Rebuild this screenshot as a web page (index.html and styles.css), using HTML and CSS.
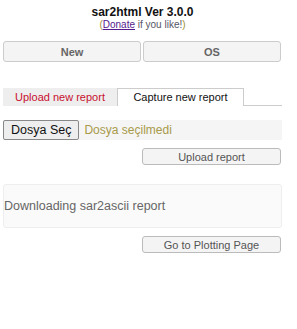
FILE: index.html
```html
<!DOCTYPE html>
<html lang="en">
<head>
  <meta charset="UTF-8">
  <title>sar2html</title>
  <link rel="stylesheet" href="styles.css">
</head>
<body>
  <header class="head">
    <div class="title">sar2html Ver 3.0.0</div>
    <div class="sub"><span class="paren">(</span><a href="#">Donate</a> if you like!<span class="paren">)</span></div>
  </header>
  <nav class="menu">
    <button class="mbtn">New</button>
    <button class="mbtn">OS</button>
  </nav>
  <div class="tabs">
    <div class="tab active">Upload new report</div>
    <div class="tab">Capture new report</div>
    <div class="tab-rest"></div>
  </div>
  <div class="filerow">
    <button class="filebtn">Dosya Seç</button>
    <span class="nofile">Dosya seçilmedi</span>
  </div>
  <div class="right upload"><button class="btn">Upload report</button></div>
  <div class="status">Downloading sar2ascii report</div>
  <div class="right plot"><button class="btn">Go to Plotting Page</button></div>
</body>
</html>
```

FILE: styles.css
```css
* {box-sizing:border-box;}
body{
  margin:0; padding:0 15px 0 3px;
  font-family:"Liberation Sans",Arial,sans-serif;
  background:#fff; color:#333;
  width:297px;
}
.head{ text-align:center; padding-top:5px; }
.title{ font-size:12px; font-weight:bold; color:#111; line-height:14px; }
.sub{ font-size:10px; line-height:12px; color:#556; }
.sub .paren{ color:#a09030; }
.sub a{ color:#551a8b; }
.menu{ display:flex; gap:2px; margin-top:10px; padding-right:1px; }
.mbtn{
  flex:1; height:21px;
  border:1px solid #ccc; border-radius:3px;
  background:#f4f4f4;
  font-family:inherit; font-size:11px; font-weight:bold; color:#666;
  padding:0;
}
.tabs{ display:flex; margin-top:26px; height:18px; }
.tab{
  font-size:11px; line-height:16px; text-align:center;
  border:1px solid #ccc; border-bottom:none;
}
.tab.active{ width:114px; background:#eee; color:#c8102e; border-color:#eee; }
.tab:nth-child(2){ width:127px; background:#fff; color:#111; }
.tab-rest{ flex:1; border-bottom:1px solid #ccc; }
.filerow{
  display:flex; align-items:center; gap:5px;
  margin-top:14px; height:20px;
  background:#f5f5f5;
}
.filebtn{
  height:20px; padding:0 7px;
  border:1px solid #888; border-radius:2px;
  background:#eee;
  font-family:inherit; font-size:12.5px; color:#111;
}
.nofile{ font-size:12px; color:#a89a4a; }
.right{ display:flex; justify-content:flex-end; padding-right:1px; }
.btn{
  width:139px; height:17px; padding:0;
  border:1px solid #bbb; border-radius:3px;
  background:#f4f4f4;
  font-family:inherit; font-size:11px; color:#555;
}
.upload{ margin-top:8px; }
.status{
  margin-top:19px; height:44px;
  display:flex; align-items:center;
  border:1px solid #eee; border-radius:3px;
  background:#fafafa;
  font-size:12.5px; color:#666;
}
.plot{ margin-top:8px; }
```
